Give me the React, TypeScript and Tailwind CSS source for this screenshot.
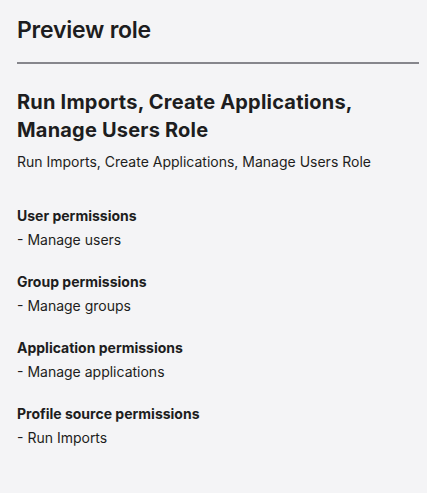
const sections = [
  { title: "User permissions", items: ["Manage users"] },
  { title: "Group permissions", items: ["Manage groups"] },
  { title: "Application permissions", items: ["Manage applications"] },
  { title: "Profile source permissions", items: ["Run Imports"] },
];

export default function App() {
  const roleName = "Run Imports, Create Applications, Manage Users Role";

  return (
    <div className="min-h-[493px] bg-[#f4f4f6] pl-[17px] pr-2 pt-[14px] text-[#1d1d20] font-['Inter',sans-serif]">
      <h1 className="text-[23px] leading-8 font-semibold tracking-[-0.01em]">Preview role</h1>
      <hr className="mt-4 border-t-2 border-[#86868c]" />

      <h2 className="mt-6 text-xl leading-7 font-bold tracking-[0.01em]">{roleName}</h2>
      <p className="mt-2 text-sm leading-5">{roleName}</p>

      <div className="mt-8 flex flex-col gap-[18px]">
        {sections.map((section) => (
          <div key={section.title} className="text-sm leading-6">
            <div className="font-bold">{section.title}</div>
            {section.items.map((item) => (
              <div key={item}>- {item}</div>
            ))}
          </div>
        ))}
      </div>
    </div>
  );
}
